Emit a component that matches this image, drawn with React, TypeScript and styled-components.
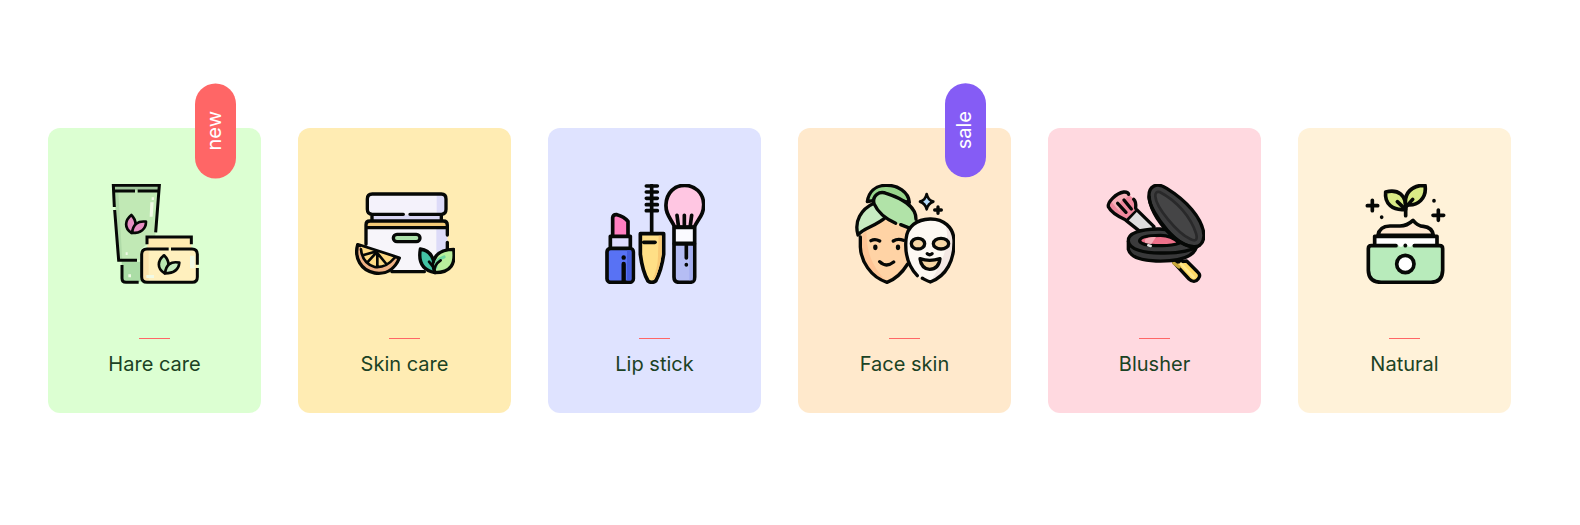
import React from "react";
import styled, { createGlobalStyle } from "styled-components";

const GlobalStyle = createGlobalStyle`
  *, *::before, *::after { box-sizing: border-box; }
  body {
    margin: 0;
    background: #ffffff;
    font-family: Inter, "Liberation Sans", sans-serif;
    color: #1b4224;
  }
`;

const Section = styled.main`
  padding: 128px 69px 112px 48px;
`;

const CardList = styled.ul`
  display: grid;
  grid-template-columns: repeat(6, minmax(0, 1fr));
  gap: 37px;
  margin: 0;
  padding: 0;
  list-style: none;
`;

const Card = styled.li<{ $color: string }>`
  position: relative;
  display: flex;
  flex-direction: column;
  align-items: center;
  padding: 56px 0 34px;
  border-radius: 12px;
  background: ${(p) => p.$color};
`;

const Divider = styled.span`
  width: 31px;
  height: 1px;
  margin: 54px 0 10px;
  background: #ff6666;
`;

const Title = styled.h2`
  margin: 0;
  font-size: 20px;
  font-weight: 400;
  line-height: 30px;
`;

const Badge = styled.span<{ $color: string }>`
  position: absolute;
  top: -45px;
  right: 25px;
  padding: 28px 7px 28px 9px;
  border-radius: 21px;
  background: ${(p) => p.$color};
  color: #ffffff;
  font-size: 20px;
  line-height: 25px;
  writing-mode: vertical-rl;
  transform: rotate(180deg);
`;

const Picture = styled.svg<{ $stroke?: number }>`
  display: block;
  width: 100px;
  height: 100px;
  fill: none;
  stroke: #060806;
  stroke-width: ${(p) => p.$stroke ?? 10}px;
  stroke-linecap: round;
  stroke-linejoin: round;

  .fill { stroke: none; }
  .square { stroke-linecap: butt; stroke-linejoin: miter; }
  .fine { stroke-width: 8px; }
  .bold { stroke-width: 13px; }
`;

const HairCareIcon = () => (
  <Picture viewBox="13 27 300 300" aria-hidden="true" $stroke={9}>
    <g className="fill">
      <path d="M38 31H178L163 190L118 224V256H55L43 100Z" fill="#c1e9b5" />
      <path d="M38 31H178L176 46H39Z" fill="#9fc79a" />
      <path d="M43 50l12 206h10L53 50z" fill="#b0dba8" />
      <path d="M63 260h57v60H72q-9 0-9-9z" fill="#abdda6" />
      <path d="M140 186h132v34H140z" fill="#ffebb0" />
      <rect x="123" y="223" width="167" height="99" rx="15" fill="#fff0be" />
      <path d="M123 238q0-15 15-15h6v99h-6q-15 0-15-15z" fill="#fbe2ad" />
      <path d="M149 82h10l-3 43h-9zM153 67h7v8h-7zM268 242h14v38h-14zM137 300h23v9h-23zM83 298h8v9h-8zM75 232h6v8h-6z" fill="#f1fae6" />
    </g>
    <g className="square">
      <path d="M41 96L38 31H176L165 172M39 48H103M111 48H176M42 105L54 256H109" />
      <path d="M64 270V310Q64 322 76 322H114" />
      <path d="M139 208V186H272V208" />
      <path d="M204 222H139Q123 222 123 238V306Q123 322 139 322H275Q290 322 290 306V279M290 269V238Q290 222 274 222H211" />
    </g>
    <g className="fine">
      <path d="M93 174C70 160 72 136 92 120C109 137 109 160 93 174Z" fill="#e78fc2" />
      <path d="M94 174C97 148 111 137 136 140C136 162 120 174 94 174Z" fill="#e78fc2" />
      <path d="M192 295C168 281 170 257 190 241C208 258 208 281 192 295Z" fill="#b8e7b0" />
      <path d="M193 295C196 269 210 258 236 263C234 285 218 295 193 295Z" fill="#c5ebbd" />
    </g>
  </Picture>
);

const SkinCareIcon = () => (
  <Picture viewBox="20 27 300 300" aria-hidden="true">
    <g className="fill">
      <rect x="57" y="57" width="237" height="62" rx="12" fill="#f4f2fb" />
      <path d="M265 57h17q12 0 12 12v38q0 12-12 12h-17z" fill="#dddbf8" />
      <path d="M71 119h208v19H71z" fill="#d9d7f4" />
      <path d="M53 157h244v132H53z" fill="#f7f5fa" />
      <path d="M264 157h33v80h-33z" fill="#dddbf8" />
      <path d="M53 157v-8q0-11 12-11h220q11 0 11 11v8z" fill="#f4cb78" />
    </g>
    <path d="M165 118H72Q57 118 57 103V72Q57 57 72 57H279Q293 57 293 72V103Q293 118 279 118H185M71 120V136M279 120V136" />
    <path d="M53 208V149Q53 138 65 138H285Q297 138 297 150V180M297 202V228M54 158H295M131 290H228" />
    <rect x="135" y="178" width="80" height="22" rx="11" fill="#ace1aa" />
    <path d="M28 209L153 249C139 284 112 299 79 294C38 287 17 249 28 209Z" fill="#efb184" />
    <path className="fill" d="M38 215L139 248C125 271 104 280 81 276C51 272 35 244 38 215Z" fill="#ffdb85" />
    <path className="fine" d="M38 223C41 253 55 269 79 276C104 279 124 266 138 249M87 232V274M83 234L57 262M86 233L114 267M80 230L46 240" />
    <path d="M260 293C224 286 209 262 216 222C243 226 261 244 260 293Z" fill="#43c3a5" />
    <path d="M260 293C244 252 267 223 316 223C322 265 309 293 260 293Z" fill="#b8ee9c" />
    <path d="M262 278C260 262 272 251 287 246" stroke="#6ed6a0" />
    <path className="fine" d="M258 293C256 276 263 265 277 256M258 280L242 260" />
  </Picture>
);

const LipStickIcon = () => (
  <Picture viewBox="20 27 300 300" aria-hidden="true" $stroke={11}>
    <path d="M43 182V128Q44 118 56 119Q77 124 89 139V182" fill="#ff7fc1" />
    <path d="M36 217V184H96V217" fill="#dedcff" />
    <rect x="26" y="220" width="79" height="102" rx="11" fill="#5872f4" />
    <path className="fill" d="M86 226h13v90H86z" fill="#455ddd" />
    <path className="bold" d="M76 267V319M76 247V248" />
    <path d="M160 31V171M144 33H177M144 51H177M144 70H177M144 89H177M144 107H177" />
    <path d="M126 176H196V238C191 274 183 298 172 318Q160 326 149 318C136 296 130 270 126 238Z" fill="#ffdf86" />
    <path className="fill" d="M181 182h9v56q-7 48-21 73l-7 4q18-38 17-77z" fill="#f9c974" />
    <path d="M136 202H170" />
    <path d="M229 156C218 130 201 119 203 88C205 52 229 31 259 31C290 31 315 54 316 87C317 119 300 131 288 156Z" fill="#ffc6e2" />
    <path d="M227 157H289V205H227Z" fill="#fafaff" />
    <path d="M227 207H289V306Q289 322 273 322H243Q227 322 227 306Z" fill="#b5bdf4" />
    <path className="fill" d="M273 213h10v103h-10z" fill="#a3adf0" />
    <path d="M236 121L240 151M258 121V151M280 121L276 151M264 212V249M264 269V270" />
  </Picture>
);

const FaceSkinIcon = () => (
  <Picture viewBox="20 27 300 300" aria-hidden="true">
    <path className="fill" d="M36 180C31 220 36 260 63 288Q87 312 116 322Q145 311 169 285L200 220L189 163L116 119Z" fill="#ffd3a5" />
    <path className="fill" d="M36 190C29 225 37 265 63 288Q87 312 116 322C80 280 55 250 54 165Z" fill="#ffc596" />
    <path d="M36 186V216C38 258 66 306 116 322C143 312 163 291 178 267" />
    <path d="M57 80C61 50 81 32 111 31C149 29 181 52 183 82C155 75 108 68 57 80Z" fill="#97d58b" />
    <path d="M78 84C37 103 17 139 29 180C46 157 82 155 113 126" fill="#c7ebc2" />
    <path className="fill" d="M142 145C113 132 88 111 77 86C71 61 93 46 116 56C156 69 204 94 203 133L187 160L157 147" fill="#b1e3a8" />
    <path d="M142 145C113 132 88 111 77 86C71 61 93 46 116 56C156 69 204 94 203 133M157 149L180 158" />
    <path className="fill" d="M207 302C181 275 169 237 173 193C176 154 206 133 245 132C286 131 315 157 317 195C319 254 295 303 246 321C237 318 230 314 222 310Z" fill="#fdf9f3" />
    <path className="fill" d="M289 145C313 157 317 184 316 218C311 266 287 307 246 321C276 274 312 201 289 145Z" fill="#f3e8e4" />
    <path d="M207 302C181 275 169 237 173 193C176 154 206 133 245 132C286 131 315 157 317 195C319 254 295 303 246 321C237 318 230 314 222 310" />
    <ellipse cx="209" cy="206" rx="20" ry="16" fill="#f5d6a5" />
    <ellipse cx="278" cy="206" rx="23" ry="16" fill="#f5d6a5" />
    <path d="M215 251Q243 261 275 251Q271 282 244 283Q219 281 215 251Z" fill="#f5d6a5" />
    <path d="M237 236Q244 242 251 236M94 260Q113 279 136 261M68 197Q80 190 94 198M135 198Q149 189 165 196" />
    <path className="bold" d="M81 215V219M149 215V219" />
    <path className="fine" d="M235 57Q239 76 255 80Q239 85 235 103Q231 85 215 80Q231 76 235 57Z" fill="#b7dcfb" />
    <path d="M269 96V115M259 105H279" />
  </Picture>
);

const BlusherIcon = () => (
  <Picture viewBox="20 27 300 300" aria-hidden="true">
    <path d="M84 137L115 104L167 155L163 169L133 176Z" fill="#dedede" />
    <path className="fill" d="M81 134C57 123 38 111 30 95C27 81 53 55 76 51Q89 50 92 60L107 71Q115 81 113 103Z" fill="#ef899d" />
    <path className="fill" d="M40 82L62 57Q82 45 92 61L80 72Q60 74 65 111Z" fill="#f7b0b8" />
    <path d="M81 134C57 123 38 111 30 95C27 81 53 55 76 51Q89 50 91 58M106 73Q114 80 112 100M58 85L83 112M77 75L99 102" />
    <path d="M226 262L272 312Q288 327 300 311Q309 301 298 291L265 258Z" fill="#ffda65" />
    <path className="fine" d="M248 266L286 307" stroke="#ffe98f" />
    <path d="M226 264L242 276" stroke="#c9a83c" />
    <path d="M90 199V223Q98 255 173 258C242 260 292 246 296 207Z" fill="#39393a" />
    <path d="M90 198C88 173 129 163 177 162Q210 161 240 170L303 211Q269 235 193 234C137 235 91 223 90 198Z" fill="#3b3b3c" />
    <path d="M124 198C124 184 152 181 187 181Q218 181 244 204Q219 213 184 212Q128 212 124 198Z" fill="#ee718a" />
    <path className="fill" d="M139 194Q151 184 173 186L159 207L141 204Z" fill="#f7aab6" />
    <path className="fine" d="M150 211L157 213" stroke="#dedede" />
    <path d="M152 69C149 34 174 20 205 40C260 74 314 128 317 182C315 205 303 216 287 215C248 214 205 173 176 129Q157 99 152 69Z" fill="#3d3d3e" />
    <path className="fine" d="M184 51C236 78 277 126 293 175Q301 204 277 193C235 174 173 96 171 64Q170 48 184 51Z" fill="#454546" stroke="#29292a" />
    <path d="M153 66C151 89 178 133 207 166C236 198 266 215 287 215" />
  </Picture>
);

const NaturalIcon = () => (
  <Picture viewBox="14 27 300 300" aria-hidden="true" $stroke={11}>
    <path d="M83 181Q87 154 119 153H149Q170 153 188 136Q203 154 219 154Q246 157 249 181Z" fill="#ffe9d2" />
    <path className="fill" d="M73 184H260V212H73Z" fill="#ffffff" />
    <path d="M73 209V184H260V209" />
    <path className="fill" d="M54 218Q54 211 63 211H268Q277 211 277 220V286Q276 322 242 322H92Q55 321 54 286Z" fill="#b8ebbb" />
    <path d="M137 212H63Q54 212 54 221V286Q55 321 92 322H242Q276 321 277 286V221Q277 212 268 212H192" />
    <path className="fine" d="M149 211H154M176 211H181" stroke="#ffffff" />
    <path d="M165 211V212" />
    <circle cx="165" cy="267" r="26" fill="#ffffff" />
    <path d="M166 103C127 108 102 86 106 51C144 41 169 61 166 103Z" fill="#d9eb86" />
    <path d="M166 89C161 55 184 30 224 31C230 69 203 95 166 89Z" fill="#d9eb86" />
    <path d="M166 122V97L187 73M163 101L141 80" />
    <path d="M66 76V107M51 92H82M264 105V136M248 121H280" />
    <path d="M94 126V127M251 77V78" />
  </Picture>
);

type Category = {
  name: string;
  color: string;
  Icon: React.FC;
  badge?: { text: string; color: string };
};

const categories: Category[] = [
  { name: "Hare care", color: "#dcffd2", Icon: HairCareIcon, badge: { text: "new", color: "#ff6666" } },
  { name: "Skin care", color: "#ffecb3", Icon: SkinCareIcon },
  { name: "Lip stick", color: "#dfe3ff", Icon: LipStickIcon },
  { name: "Face skin", color: "#ffe9cc", Icon: FaceSkinIcon, badge: { text: "sale", color: "#855cf5" } },
  { name: "Blusher", color: "#ffd9e0", Icon: BlusherIcon },
  { name: "Natural", color: "#fff2d9", Icon: NaturalIcon },
];

export default function App() {
  return (
    <>
      <GlobalStyle />
      <Section>
        <CardList>
          {categories.map(({ name, color, Icon, badge }) => (
            <Card key={name} $color={color}>
              {badge && <Badge $color={badge.color}>{badge.text}</Badge>}
              <Icon />
              <Divider />
              <Title>{name}</Title>
            </Card>
          ))}
        </CardList>
      </Section>
    </>
  );
}
